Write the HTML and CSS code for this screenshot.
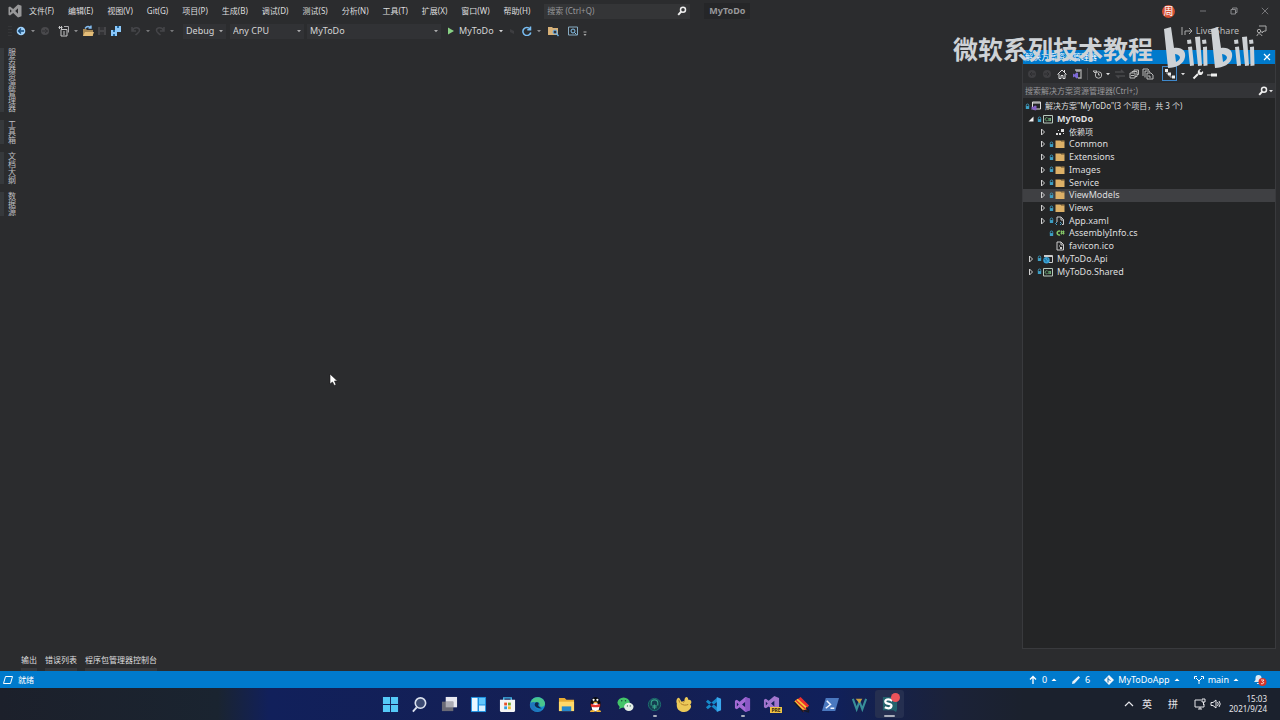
FILE: index.html
```html
<!DOCTYPE html>
<html lang="zh-CN">
<head>
<meta charset="utf-8">
<title>MyToDo</title>
<link rel="stylesheet" href="styles.css">
</head>
<body>
<svg class="defs" aria-hidden="true">
  <symbol id="lock" viewBox="0 0 6 8"><path d="M1.5 4V2.5a1.5 1.5 0 0 1 3 0V4" fill="none" stroke="#3d9fc4"/><path d="M1 3.5h4V7H1z" fill="#3d9fc4"/></symbol>
  <symbol id="folder" viewBox="0 0 10 10"><path d="M.5 1.5h5l1 1h3v6.500h-9z" fill="#dcb067"/><path d="M6 1.500h3.500v1H7z" fill="#b98f4d"/></symbol>
  <symbol id="closed" viewBox="0 0 6 8"><path d="M1.500 1l3 3-3 3z" fill="none" stroke="#d0d0d0"/></symbol>
  <symbol id="open" viewBox="0 0 6 8"><path d="M5.500 1.500v5h-5z" fill="#f1f1f1"/></symbol>
  <symbol id="cs" viewBox="0 0 10 10"><path d="M.5 1.500h9v7.500h-9z" fill="#252526" stroke="#b8c9bd"/><path d="M4.500 4a1.500 1.500 0 1 0 0 2.500M6 4v3M7.500 4v3M5.500 4.700H8M5.500 6.200H8" stroke="#73bd80" stroke-width=".8" fill="none"/></symbol>
  <symbol id="search" viewBox="0 0 10 10"><circle cx="6" cy="3.700" r="2.500" fill="none" stroke="#eee" stroke-width="1.500"/><path d="M4.300 5.500L1.200 8.800" stroke="#eee" stroke-width="1.900"/></symbol>
  <symbol id="down" viewBox="0 0 6 6"><path d="M1 2h4L3 4.200z" fill="currentColor"/></symbol>
  <symbol id="up" viewBox="0 0 6 6"><path d="M.5 4h5L3 1.500z" fill="#fff"/></symbol>
  <symbol id="undo" viewBox="0 0 12 12"><path d="M2 2v4h4M2.500 5.500C4 2 9 2 9.500 5c.4 2-1.500 3-4 5" fill="none" stroke="#4c4c50" stroke-width="1.500"/></symbol>
</svg>
<div class="ide">
  <header class="menubar">
    <svg class="logo" viewBox="0 0 14 14"><path d="M10 .5l3.500 1.300v10.400L10 13.500 5.200 9.100 2 11.600.5 10.700V3.300L2 2.400l3.200 2.500zM10 4.200L7.200 7 10 9.800zM2 5.200v3.600L3.800 7z" fill="#989899" fill-rule="evenodd"/></svg>
    <nav class="menus">
      <button>文件(F)</button><button>编辑(E)</button><button>视图(V)</button><button>Git(G)</button><button>项目(P)</button><button>生成(B)</button><button>调试(D)</button><button>测试(S)</button><button>分析(N)</button><button>工具(T)</button><button>扩展(X)</button><button>窗口(W)</button><button>帮助(H)</button>
    </nav>
    <label class="quick"><input type="text" aria-label="搜索" placeholder="搜索 (Ctrl+Q)"><svg class="i10"><use href="#search"/></svg></label>
    <span class="product">MyToDo</span>
    <span class="avatar">周</span>
    <div class="winbuttons">
      <button aria-label="最小化"><svg class="i8" viewBox="0 0 8 8"><path d="M1 4h6" stroke="#77777a"/></svg></button>
      <button aria-label="还原"><svg class="i8" viewBox="0 0 8 8"><path d="M1 2.500h4.500V7H1zM2.500 2.500V1H7v4.500H5.500" fill="none" stroke="#88888b"/></svg></button>
      <button aria-label="关闭"><svg class="i8" viewBox="0 0 8 8"><path d="M.8.800l6.400 6.400M7.200.800L.8 7.200" stroke="#77777a"/></svg></button>
    </div>
  </header>
  <div class="toolbar">
    <svg class="grip" viewBox="0 0 4 12"><path d="M1 1v10M3 1v10" stroke="#404043" stroke-dasharray="1 2"/></svg>
    <div class="group">
      <button aria-label="后退"><svg class="i10" viewBox="0 0 10 10"><circle cx="5" cy="5" r="4.300" fill="#9dd0fa"/><path d="M8 5H2.500M5 2.500L2.500 5 5 7.500" fill="none" stroke="#174b7b" stroke-width="1.300"/></svg></button>
      <svg class="i6"><use href="#down"/></svg>
      <button aria-label="前进"><svg class="i10" viewBox="0 0 10 10"><circle cx="5" cy="5" r="4" fill="#49494c"/><path d="M2 5h5.500M5 3l2.500 2L5 7" fill="none" stroke="#303033"/></svg></button>
    </div>
    <div class="group files">
      <button aria-label="新建项目"><svg class="i12" viewBox="0 0 12 12"><path d="M3 4.500h6V11H3zM.5 2.500h4M1 1l3 3M4 1L1 4M5 7h2M5 9h2" fill="none" stroke="#c7c7c8"/><path d="M6 1.500h4.500v6" fill="none" stroke="#ababae"/></svg></button>
      <svg class="i6"><use href="#down"/></svg>
      <button aria-label="打开文件"><svg class="i12" viewBox="0 0 12 12"><path d="M1 4h3l1 1h6v6H1z" fill="#a98954"/><path d="M3 7h9l-1.500 4H1z" fill="#e4bd78"/><path d="M3 3.500C5 1 7 1 9 3M6.500 3H9V.5" fill="none" stroke="#84bdf0" stroke-width="1.400"/></svg></button>
      <button aria-label="保存"><svg class="i10" viewBox="0 0 10 10"><path d="M1 1h8v8H1z" fill="#454548"/><path d="M3 1h4v3H3zM3 6h4v3H3z" fill="#333336"/></svg></button>
      <button aria-label="全部保存"><svg class="i12" viewBox="0 0 12 12"><path d="M5 1h6v6H5zM1 5h6v6H1z" fill="#8bc8fa"/><path d="M7 1h2v2H7zM3 5h2v2H3zM3 9h2v2H3z" fill="#23689f"/></svg></button>
    </div>
    <div class="group dim">
      <button aria-label="撤消"><svg class="i12"><use href="#undo"/></svg></button><svg class="i6"><use href="#down"/></svg>
      <button aria-label="重做"><svg class="i12 flip"><use href="#undo"/></svg></button><svg class="i6"><use href="#down"/></svg>
    </div>
    <span class="combo c-debug"><select aria-label="配置"><option>Debug</option></select><svg class="i6"><use href="#down"/></svg></span>
    <span class="combo c-cpu"><select aria-label="平台"><option>Any CPU</option></select><svg class="i6"><use href="#down"/></svg></span>
    <span class="combo c-start"><select aria-label="启动项目"><option>MyToDo</option></select><svg class="i6"><use href="#down"/></svg></span>
    <button class="run"><svg class="i8" viewBox="0 0 8 8"><path d="M1 0.500l6 3.500-6 3.500z" fill="#89d185"/></svg>MyToDo<svg class="i6"><use href="#down"/></svg></button>
    <div class="group tail">
      <svg class="i10" viewBox="0 0 10 10"><path d="M2 3l4 2v3L2 6z" fill="#3d3d40"/></svg>
      <button aria-label="重启"><svg class="i10" viewBox="0 0 10 10"><path d="M8 3A4 4 0 1 0 8.800 6.500M8.500.500v3.200H5.300" fill="none" stroke="#79bdf2" stroke-width="1.500"/></svg></button>
      <svg class="i6"><use href="#down"/></svg>
    </div>
    <button aria-label="在文件中查找"><svg class="i12" viewBox="0 0 12 12"><path d="M1 2h4l1 1h5v7H1z" fill="#d8b177"/><circle cx="8" cy="7" r="2" fill="#34343a" stroke="#6bb3ed"/><path d="M9.500 8.500l2 2.500" stroke="#6bb3ed" stroke-width="1.300"/></svg></button>
    <button class="spy" aria-label="实时预览"><svg class="i12" viewBox="0 0 12 12"><path d="M1.500 2h9v8h-9z" fill="none" stroke="#86aac1"/><circle cx="6" cy="6" r="2" fill="none" stroke="#84c2ec"/><path d="M7.500 7.500L9.500 9.500" stroke="#84c2ec"/></svg></button>
    <svg class="i6 low" viewBox="0 0 6 6"><path d="M1.500 1h3" stroke="#aaa"/><path d="M1.500 3h3L3 5z" fill="#aaa"/></svg>
    <div class="share"><svg class="i12" viewBox="0 0 12 12"><path d="M1 2v8M4 10V6h7M8 3l3 3-3 3" fill="none" stroke="#aaa"/></svg><button>Live Share</button><button aria-label="反馈"><svg class="i12" viewBox="0 0 12 12"><path d="M4 1h7v5H9L7 8V6M2 11c0-3 4-3 5 0" fill="none" stroke="#aaa"/><circle cx="4" cy="6" r="1.700" fill="none" stroke="#aaa"/></svg></button></div>
  </div>
  <main class="work">
    <nav class="sidetabs"><button>服务器资源管理器</button><button>工具箱</button><button>文档大纲</button><button>数据源</button></nav>
    <section class="editor"></section>
    <aside class="explorer">
      <div class="paneltitle"><span>解决方案资源管理器</span><button aria-label="关闭"><svg class="i8" viewBox="0 0 8 8"><path d="M1 1l6 6M7 1L1 7" stroke="#fff" stroke-width="1.200"/></svg></button></div>
      <div class="paneltools">
        <svg class="i10" viewBox="0 0 10 10"><circle cx="5" cy="5" r="4" fill="#3e3e41"/><path d="M8 5H3l2-2M3 5l2 2" fill="none" stroke="#2d2d30"/></svg>
        <svg class="i10" viewBox="0 0 10 10"><circle cx="5" cy="5" r="4" fill="#3e3e41"/><path d="M2 5h5L5 3M7 5L5 7" fill="none" stroke="#2d2d30"/></svg>
        <button aria-label="主页"><svg class="i10" viewBox="0 0 10 10"><path d="M.5 5.500L5 1l4.500 4.500M2 5v4.500h2v-3h2v3h2V5M7.500 3V1" fill="none" stroke="#ddd"/></svg></button>
        <button aria-label="切换视图"><svg class="i10" viewBox="0 0 10 10"><path d="M3 1h6v8H6M4 2h4" fill="none" stroke="#aaa" stroke-width="1.300"/><path d="M4.500 3.500L6 4v5l-1.500.5L2.500 7.500 1 8.500v-4l1.500 1z" fill="#7d6ad5"/></svg></button>
        <i class="sep"></i>
        <div class="toolset">
        <button class="pair" aria-label="筛选"><svg class="i10" viewBox="0 0 10 10"><circle cx="5.500" cy="6" r="3.200" fill="none" stroke="#bbb"/><path d="M5.500 4v2H7M0 2h4L2 4z" fill="none" stroke="#bbb"/></svg><svg class="i6"><use href="#down"/></svg></button>
        <svg class="i12" viewBox="0 0 12 12"><path d="M1 4h8L7 2M11 8H3l2 2" fill="none" stroke="#48484b" stroke-width="1.500"/></svg>
        <button aria-label="全部折叠"><svg class="i10" viewBox="0 0 10 10"><path d="M1 4h5v5H1zM3 4V2.500h5v5H6M5 2.500V1h4.500v4.500H8M2 6.500h3" fill="none" stroke="#bbb"/></svg></button>
        <button aria-label="显示所有文件"><svg class="i12" viewBox="0 0 12 12"><path d="M1 8V1h5l1 1.500M3 9.500V3h4l1 1.500M5 5h4l2 2v4H5zM7 7v2h2" fill="none" stroke="#bbb"/></svg></button>
        <button class="active" aria-label="同步"><svg class="i12" viewBox="0 0 12 12"><path d="M3 3v3h3M6 6v3h3" fill="none" stroke="#aaa"/><path d="M1 1h3v3H1zM4 4.500h3v3H4zM8 7.500h3v3H8z" fill="#eee"/></svg></button>
        <svg class="i6"><use href="#down"/></svg>
        <button class="wrench" aria-label="属性"><svg class="i12" viewBox="0 0 12 12"><path d="M1.500 10.500L6 6" stroke="#eee" stroke-width="2"/><path d="M9 1L7.500 3l1.500 1.500L11 3a3 3 0 0 1-4 3.800A3.200 3.200 0 0 1 9 1z" fill="#eee"/></svg></button>
        <button aria-label="预览"><svg class="i10" viewBox="0 0 10 10"><path d="M0 6h4" stroke="#ddd"/><path d="M4 4.500h6v3H4z" fill="#eee"/></svg></button>
        </div>
      </div>
      <label class="panelsearch"><input type="text" aria-label="搜索解决方案资源管理器" placeholder="搜索解决方案资源管理器(Ctrl+;)"><svg class="i10"><use href="#search"/></svg><svg class="i6"><use href="#down"/></svg></label>
      <ul class="tree">
        <li class="root"><svg class="lk"><use href="#lock"/></svg><svg class="i10" viewBox="0 0 10 10"><path d="M1.500 1h8v7h-8zM1.500 2h8" fill="none" stroke="#ddd"/><path d="M4 4.500l1.500.5v4L4 9.500 2 8 .5 9V5.500L2 6z" fill="#8661c5"/></svg>解决方案"MyToDo"(3 个项目，共 3 个)</li>
        <li class="l1"><svg class="ar"><use href="#open"/></svg><svg class="lk"><use href="#lock"/></svg><svg class="i10"><use href="#cs"/></svg><b>MyToDo</b></li>
        <li class="l2 deps"><svg class="ar"><use href="#closed"/></svg><span class="lk"></span><svg class="i10" viewBox="0 0 10 10"><path d="M1 6h2v2H1zM4 6h2v2H4zM6 2h3v3H6zM3 3h1v1H3zM8 6h1v1H8z" fill="#ddd"/></svg>依赖项</li>
        <li class="l2"><svg class="ar"><use href="#closed"/></svg><svg class="lk"><use href="#lock"/></svg><svg class="i10"><use href="#folder"/></svg>Common</li>
        <li class="l2"><svg class="ar"><use href="#closed"/></svg><svg class="lk"><use href="#lock"/></svg><svg class="i10"><use href="#folder"/></svg>Extensions</li>
        <li class="l2"><svg class="ar"><use href="#closed"/></svg><svg class="lk"><use href="#lock"/></svg><svg class="i10"><use href="#folder"/></svg>Images</li>
        <li class="l2"><svg class="ar"><use href="#closed"/></svg><svg class="lk"><use href="#lock"/></svg><svg class="i10"><use href="#folder"/></svg>Service</li>
        <li class="l2 selected"><svg class="ar"><use href="#closed"/></svg><svg class="lk"><use href="#lock"/></svg><svg class="i10"><use href="#folder"/></svg>ViewModels</li>
        <li class="l2"><svg class="ar"><use href="#closed"/></svg><svg class="lk"><use href="#lock"/></svg><svg class="i10"><use href="#folder"/></svg>Views</li>
        <li class="l2"><svg class="ar"><use href="#closed"/></svg><svg class="lk"><use href="#lock"/></svg><svg class="i10" viewBox="0 0 10 10"><path d="M2 6V1h4l2.500 2.500V8.500H7M6 1v3h2.500" fill="none" stroke="#ccc"/><path d="M2 6L.5 7.500 2 9M5 6l1.500 1.500L5 9" fill="none" stroke="#4aa6cf"/></svg>App.xaml</li>
        <li class="l2"><span class="ar"></span><svg class="lk"><use href="#lock"/></svg><svg class="i10" viewBox="0 0 10 10"><path d="M5 3.200A2 2 0 1 0 5 6.800" fill="none" stroke="#86c968" stroke-width="1.500"/><path d="M6.500 2.500v4M8.500 2.500v4M5.500 3.700h4M5.500 5.300h4" fill="none" stroke="#86c968"/></svg>AssemblyInfo.cs</li>
        <li class="l2"><span class="ar"></span><span class="lk"></span><svg class="i10" viewBox="0 0 10 10"><path d="M2 1h4l2.500 2.500V9H2zM6 1v3h2.500" fill="none" stroke="#ccc"/><path d="M4 4.500h1v1H4zM5 6h2v2H5z" fill="#ccc"/></svg>favicon.ico</li>
        <li class="l1"><svg class="ar"><use href="#closed"/></svg><svg class="lk"><use href="#lock"/></svg><svg class="i10" viewBox="0 0 10 10"><path d="M1 1.500h8.500v7H6M1 2.500h8" fill="none" stroke="#ccc"/><circle cx="3.500" cy="6.200" r="3.200" fill="#3aa2d5"/><path d="M1 5l2 1v2M4 4l1 2" fill="none" stroke="#175a7e" stroke-width=".7"/></svg>MyToDo.Api</li>
        <li class="l1"><svg class="ar"><use href="#closed"/></svg><svg class="lk"><use href="#lock"/></svg><svg class="i10"><use href="#cs"/></svg>MyToDo.Shared</li>
      </ul>
    </aside>
  </main>
  <nav class="bottomtabs"><button>输出</button><button>错误列表</button><button>程序包管理器控制台</button></nav>
  <footer class="status">
    <svg class="i10" viewBox="0 0 10 10"><path d="M2.500 1.500h7l-2 7h-7z" fill="none" stroke="#fff"/></svg><span>就绪</span>
    <div class="git">
      <button><svg class="i10" viewBox="0 0 10 10"><path d="M5 9V2M2 4.500L5 1.500l3 3" fill="none" stroke="#fff" stroke-width="1.300"/></svg>0<svg class="i6"><use href="#up"/></svg></button>
      <button><svg class="i10" viewBox="0 0 10 10"><path d="M1 9l.5-2.500 6-5.500L9 2.500l-5.500 6z" fill="#e6f1fa"/></svg>6</button>
      <button><svg class="i10" viewBox="0 0 10 10"><path d="M5 0l5 5-5 5-5-5z" fill="#f0f5fa"/><path d="M4 2.500v5M4 4l2.500 1.500" stroke="#176ca8"/></svg>MyToDoApp<svg class="i6"><use href="#up"/></svg></button>
      <button><svg class="i10" viewBox="0 0 10 10"><path d="M5 9V6L2 3M5 6l3-3M.5 4V1.500H3M7 1.500h2.500V4" fill="none" stroke="#fff"/></svg>main<svg class="i6"><use href="#up"/></svg></button>
      <button class="bell" aria-label="通知"><svg viewBox="0 0 14 12"><path d="M1 8l1.500-2V4a3 3 0 0 1 6 0v2L10 8zM4 9h3v1H4z" fill="#dceaf4"/><circle cx="9.500" cy="8" r="4" fill="#d73327"/><path d="M8 6h3L9.500 7.700c2 .3 1.500 2.600-1.500 2" stroke="#fff" stroke-width=".8" fill="none"/></svg></button>
    </div>
  </footer>
</div>
<div class="taskbar">
  <div class="apps">
    <button aria-label="开始"><svg viewBox="0 0 18 18"><path d="M1 1h7.500v7.500H1zM9.500 1H17v7.500H9.500zM1 9.500h7.500V17H1zM9.500 9.500H17V17H9.500z" fill="#55c9f7"/></svg></button>
    <button aria-label="搜索"><svg viewBox="0 0 18 18"><circle cx="10" cy="7.500" r="5.500" fill="#3c4a72" stroke="#dbe1ee" stroke-width="1.700"/><path d="M6 12l-4 4.500" stroke="#dbe1ee" stroke-width="2"/></svg></button>
    <button aria-label="任务视图"><svg viewBox="0 0 18 18"><path d="M5 1h12v11H5z" fill="#e8e8f0"/><path d="M1 6h12v10H1z" fill="#6a6a76"/><path d="M5 6h8v6H5z" fill="#aaaab3"/></svg></button>
    <button aria-label="小组件"><svg viewBox="0 0 18 18"><path d="M1 1h16v16H1z" fill="#168bdd"/><path d="M2 2h6v14H2z" fill="#e9f7ff"/><path d="M9.500 2H16v7H9.500z" fill="#62c7fb"/><path d="M9.500 10H16v6H9.500z" fill="#d7f0ff"/></svg></button>
    <button aria-label="应用商店"><svg viewBox="0 0 18 18"><path d="M5 5V2h8v3" fill="none" stroke="#43b7e9" stroke-width="1.500"/><path d="M1 4h16v12l-1 1H2l-1-1z" fill="#f5f5f5"/><path d="M5.500 7H8.500v3h-3z" fill="#e85329"/><path d="M9.500 7h3v3h-3z" fill="#72aa2b"/><path d="M5.500 11h3v3h-3z" fill="#30a0dc"/><path d="M9.500 11h3v3h-3z" fill="#f2b62c"/></svg></button>
    <button aria-label="Edge"><svg viewBox="0 0 18 18"><circle cx="9" cy="9" r="8" fill="#168bce"/><path d="M2 6C5-1 16 0 17 8c0 4-5 4-6 2 2-4-5-5-9-1z" fill="#49c58d"/><path d="M6 7c-2 4 2 9 8 7-4 5-14 2-13-5 1-3 4-3 5-2z" fill="#2076bd"/><path d="M7 7c-3 3 1 7 7 6-3-1-5-3-4-4 1-2-1-3-3-2z" fill="#10274f"/></svg></button>
    <button aria-label="文件资源管理器"><svg viewBox="0 0 18 18"><path d="M1 2h6l2 2h8v12H1z" fill="#e9ac32"/><path d="M1 6h16v10H1z" fill="#ffd969"/><path d="M4 11h10v5H4z" fill="#2588cc"/></svg></button>
    <button aria-label="QQ"><svg viewBox="0 0 18 18"><ellipse cx="9" cy="9" rx="5.500" ry="8" fill="#080b12"/><ellipse cx="9" cy="12" rx="4" ry="4.500" fill="#fff"/><path d="M4 8q5 3 10 0v3q-5 2-10 0z" fill="#e7362e"/><path d="M6 6h6l-3 2zM4 15h4v2H3zM10 15h4l1 2h-5z" fill="#f5b630"/><circle cx="7" cy="4" r="1.200" fill="#fff"/><circle cx="11" cy="4" r="1.200" fill="#fff"/></svg></button>
    <button aria-label="微信"><svg viewBox="0 0 18 18"><ellipse cx="7" cy="7" rx="6.500" ry="5.500" fill="#43c568"/><path d="M3 11l-1 3 4-2z" fill="#43c568"/><ellipse cx="12.500" cy="11.500" rx="5" ry="4.300" fill="#e4efe7"/><g fill="#194e39"><circle cx="5" cy="5" r=".8"/><circle cx="9" cy="5" r=".8"/><circle cx="11" cy="10.500" r=".6"/><circle cx="14" cy="10.500" r=".6"/></g></svg></button>
    <button class="running" aria-label="GitKraken"><svg viewBox="0 0 18 18"><circle cx="9" cy="9" r="6.500" fill="#143d50" stroke="#1d6f70"/><path d="M5.500 10V7.500c0-4.500 7-4.500 7 0V10M7.500 13V9.500M10.500 13V9.500M9 9v5" fill="none" stroke="#37a38b" stroke-width="1.200"/></svg></button>
    <button aria-label="Beekeeper"><svg viewBox="0 0 18 18"><path d="M2 8C0 4 4 0 5 3l2 3 3-1c0-5 4-5 4-1 4-1 4 4 2 5 3 2-1 8-6 8S1 14 2 8z" fill="#ecc958"/><path d="M6 8c3 2 5 2 8 1M10 5l-1 2M4 4l1 3" fill="none" stroke="#ac7c29"/></svg></button>
    <button aria-label="VS Code"><svg viewBox="0 0 18 18"><path d="M1 6l2-2 10 8v4.500zM1 12l2 2 10-8V1.500z" fill="#168acb"/><path d="M12.500 1L17 3v12l-4.500 2z" fill="#39a7ed"/></svg></button>
    <button class="running" aria-label="Visual Studio"><svg viewBox="0 0 18 18"><path d="M12 1l5 2v12l-5 2-6-5-3 2-2-1V5l2-1 3 2zM12 6L8.500 9l3.500 3zM3 7v4l2-2z" fill="#a46bd6" fill-rule="evenodd"/><path d="M12 1l5 2v12l-5 2z" fill="#8a58c6"/></svg></button>
    <button aria-label="Visual Studio Preview"><svg viewBox="0 0 18 18"><path d="M12 0l5 2v12l-5 2-6-5-3 2-2-1V4l2-1 3 2zM12 5L8.500 8l3.500 3zM3 6v4l2-2z" fill="#a276ce" fill-rule="evenodd"/></svg><span class="pre">PRE</span></button>
    <button aria-label="工具"><svg viewBox="0 0 18 18"><path d="M1 6l7-5 9 9-6 7z" fill="#ec302d"/><path d="M1 6l4-3 10 9-3 4z" fill="#f5c938"/><path d="M3 4.500l11 10" stroke="#ec302d" stroke-width="1.500"/><path d="M1 6l10 11M11 15l6 2M14 12l3 4" stroke="#161b25" stroke-width="1.500"/></svg></button>
    <button aria-label="PowerShell"><svg viewBox="0 0 18 18"><path d="M4 2h14l-4 14H0z" fill="#4a78bf"/><path d="M5 5l4 4-5 4M9 13h4" fill="none" stroke="#f1f5ff" stroke-width="1.600"/></svg></button>
    <button aria-label="WebStorm"><svg viewBox="0 0 18 18"><path d="M2 3l4 11 3-8 3 8 4-11" fill="none" stroke="#398f99" stroke-width="2.200"/><path d="M5 3h7l-3 5z" fill="#c59f43"/></svg></button>
    <button class="current running" aria-label="录屏"><svg viewBox="0 0 18 18"><path d="M2 1h15v13l-1 3-3-2H2z" fill="#23636d"/><path d="M12 5C8 2 3 4 5 7c2 2 7 1 6 4-1 3-5 2-7 1" fill="none" stroke="#fff" stroke-width="2.400"/></svg><span class="rec"></span></button>
  </div>
  <div class="tray">
    <svg class="i10" viewBox="0 0 10 10"><path d="M1 7l4-4 4 4" fill="none" stroke="#e7e7eb" stroke-width="1.200"/></svg><span>英</span><span>拼</span>
    <div class="net"><svg class="i12" viewBox="0 0 12 12"><path d="M7 2H1v7h9V6M4 11h4M6 9v2M8 1v3h3V1zM9.500 4v3" fill="none" stroke="#e7e7eb"/></svg><svg class="i12" viewBox="0 0 12 12"><path d="M1 4.500h2L6 2v8L3 7.500H1zM7.500 4q1.500 2 0 4M9 3q2.500 3 0 6" fill="none" stroke="#e7e7eb"/></svg></div>
    <div class="clock"><span>15:03</span><span>2021/9/24</span></div>
  </div>
</div>
<div class="watermark"><span>微软系列技术教程</span>
  <svg viewBox="0 0 94 42" role="img" aria-label="bilibili">
    <symbol id="mark" viewBox="0 0 47 42"><path d="M0 2L7 0l3 21c9-1 12 4 11 9-1 7-9 11-17 11zM11 27l1 8c5-2 6-7-1-8z" fill-rule="evenodd"/><path d="M24 20l4-.5 2 19-4 .5zM23 13l4-.5.5 4-4 .5zM31 10l5-.5 2 29-4 .5zM39 20l4-.5.5 19-4 .5zM38 13l4-.5.5 4-4 .5z"/></symbol>
    <g fill="#ced2d6"><use href="#mark" width="47" height="42"/><use href="#mark" x="47" width="47" height="42"/></g>
  </svg>
</div>
<svg class="pointer" viewBox="0 0 9 13"><path d="M1 1v10l2.500-2 1.800 3.500 1.700-.8L5.500 8H8.500z" fill="#fff" stroke="#18181a" stroke-width=".6"/></svg>
</body>
</html>
```
FILE: styles.css
```css
* { box-sizing: border-box; }
body {
  margin: 0;
  height: 100vh;
  display: flex;
  flex-direction: column;
  overflow: hidden;
  position: relative;
  background: #2b2c2e;
  color: #dededf;
  font: 9px/12px "Noto Sans", "Noto Sans CJK SC", sans-serif;
}
button, input, select { font: inherit; color: inherit; background: none; border: 0; padding: 0; margin: 0; }
button { display: flex; align-items: center; justify-content: center; white-space: nowrap; }
input { outline: 0; min-width: 0; }
svg { display: block; flex: none; }
.defs { position: absolute; width: 0; height: 0; }
.i6 { width: 6px; height: 6px; }
.i8 { width: 8px; height: 8px; }
.i10 { width: 10px; height: 10px; }
.i12 { width: 12px; height: 12px; }
.flip { transform: scaleX(-1); }

.ide { flex: 1; min-height: 0; display: flex; flex-direction: column; }
.menubar { display: flex; align-items: center; height: 22px; padding: 0 8px; font-size: 8px; }
.logo { width: 14px; height: 14px; }
.menus { display: flex; gap: 14px; margin-left: 7px; }
.quick { display: flex; align-items: center; width: 146px; height: 15px; margin-left: 14px; padding: 0 3px; background: #343537; }
.quick input { flex: 1; }
input::placeholder { color: #98989b; opacity: 1; }
.product { margin-left: 14px; padding: 2px 5px; background: #252628; color: #98989b; font-size: 9px; font-weight: 700; }
.avatar { width: 13px; height: 13px; margin-left: auto; border-radius: 50%; background: #d34e32; color: #fff; font-size: 10px; line-height: 12px; text-align: center; }
.winbuttons { display: flex; gap: 23px; margin: 0 3px 0 24px; }

.toolbar { display: flex; align-items: center; height: 18px; padding: 0 13px 0 8px; color: #d5d5d6; }
.grip { width: 4px; height: 12px; }
.group { display: flex; align-items: center; gap: 4px; margin-left: 4px; }
.group + .group { margin-left: 8px; }
.group .i6 { color: #8b8b8e; }
.files { gap: 3px; }
.dim { opacity: .8; gap: 3px; }
.combo { display: flex; align-items: center; position: relative; height: 15px; background: #313235; }
.combo select { width: 100%; height: 100%; padding-left: 3px; appearance: none; outline: 0; }
.combo .i6 { position: absolute; right: 2px; pointer-events: none; color: #aaaaac; }
.c-debug { width: 43px; margin-left: 8px; }
.c-cpu { width: 74px; margin-left: 4px; }
.c-start { width: 134px; margin-left: 3px; }
.run { gap: 4px; margin-left: 6px; }
.tail { margin: 0 5px 0 4px; }
.spy { margin-left: 8px; }
.low { align-self: flex-end; margin: 0 0 3px 3px; }
.share { display: flex; align-items: center; gap: 3px; margin-left: auto; color: #bbb; }
.share button:last-child { margin-left: 13px; }

.work { flex: 1; min-height: 0; display: flex; padding-right: 4px; }
.sidetabs { width: 22px; padding-top: 8px; display: flex; flex-direction: column; align-items: flex-start; gap: 8px; }
.sidetabs button { writing-mode: vertical-rl; width: 17px; padding-left: 2px; border-left: 4px solid #36393c; font-size: 8px; line-height: 8px; color: #bebfc1; }
.editor { flex: 1; }
.explorer { width: 254px; margin: 10px 0 3px; background: #242526; border: 1px solid #393a3d; border-top: 0; }
.paneltitle { display: flex; align-items: center; justify-content: space-between; height: 14px; padding: 0 4px 0 2px; background: #007acc; font-size: 8px; color: #fff; }
.paneltools { display: flex; align-items: center; gap: 5px; height: 19px; padding: 0 4px; background: #2b2c2e; }
.toolset { display: flex; align-items: center; gap: 3px; }
.sep { width: 1px; height: 12px; background: #46464a; }
.pair { gap: 2px; }
.active { width: 15px; height: 15px; margin-left: 5px; border: 1px solid #3f88cb; }
.wrench { margin-left: 3px; }
.panelsearch { display: flex; align-items: center; height: 15px; padding: 0 1px 0 2px; background: #333437; font-size: 8px; }
.panelsearch input { flex: 1; }
.tree { display: grid; grid-auto-rows: 1fr; height: 178px; margin: 2px 0 0; padding: 0; list-style: none; }
.tree li { display: flex; align-items: center; min-height: 0; gap: 1px; white-space: nowrap; font-size: 9px; }
.tree .root { padding-left: 2px; font-size: 8px; }
.tree .l1 { padding-left: 5px; }
.tree .l2 { padding-left: 17px; }
.tree .deps { font-size: 8px; }
.tree .i10 { margin-right: 3px; }
.ar { width: 6px; height: 8px; margin-right: 2px; }
.lk { width: 5px; height: 7px; }
.selected { background: #3f4043; }
.bottomtabs { display: flex; gap: 8px; height: 19px; padding-left: 21px; font-size: 8px; }
.bottomtabs button { border-bottom: 3px solid #38393c; }
.status { display: flex; align-items: center; gap: 5px; height: 17px; padding: 0 13px 0 3px; background: #007acc; color: #fff; font-size: 8px; }
.git { display: flex; gap: 14px; margin-left: auto; font-size: 9px; }
.git button { gap: 4px; }
.bell svg { width: 14px; height: 12px; }

.taskbar { height: 32px; display: grid; grid-template-columns: 1fr 528px 1fr; align-items: center; background: linear-gradient(90deg, #1c202b 0%, #1a2430 17%, #11205b 21%, #151f52 50%, #10205b 65%, #1b2239 74%, #1b212d 80%); }
.apps { grid-column: 2; display: grid; grid-template-columns: repeat(18, 1fr); height: 28px; }
.apps button { position: relative; }
.apps svg { width: 17px; height: 17px; }
.running::after { content: ""; position: absolute; bottom: 1px; width: 4px; height: 2px; border-radius: 1px; background: #aaaebb; }
.current { background: #252f50; border-radius: 3px; }
.current::after { width: 11px; }
.rec { position: absolute; top: 3px; right: 4px; width: 9px; height: 9px; border-radius: 50%; background: #eb535a; }
.pre { position: absolute; right: 5px; bottom: 5px; padding: 0 1px; background: #f2c343; color: #30240e; font-size: 5px; font-weight: 700; line-height: 6px; }
.tray { justify-self: end; display: flex; align-items: center; gap: 16px; padding-right: 13px; font-size: 10px; color: #e7e7eb; }
.tray > .i10 { margin-right: -8px; }
.net { display: flex; gap: 4px; }
.clock { display: flex; flex-direction: column; text-align: right; margin-left: -9px; font-size: 8px; line-height: 10px; }
.watermark { position: absolute; top: 24px; right: 22px; display: flex; align-items: center; gap: 11px; color: #ced2d6; font: 700 25px/48px "Noto Sans CJK SC", sans-serif; pointer-events: none; }
.watermark svg { width: 94px; height: 42px; }
.pointer { position: absolute; left: 329px; top: 373px; width: 9px; height: 13px; }
```
